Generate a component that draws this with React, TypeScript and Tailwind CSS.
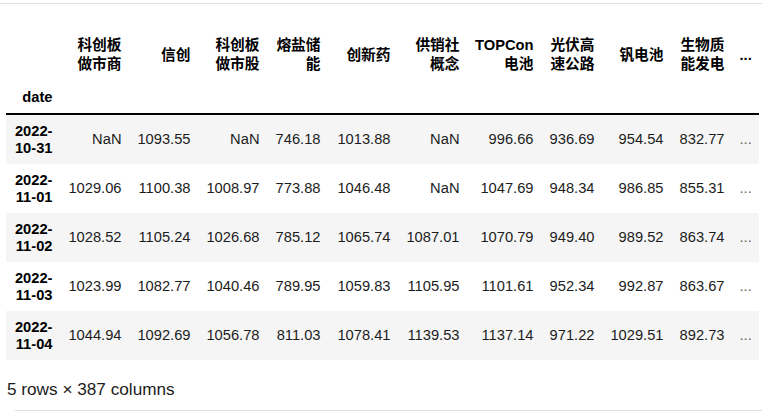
import React from 'react';

type Row = { date: [string, string]; values: string[] };

const columns: string[] = [
  '科创板做市商',
  '信创',
  '科创板做市股',
  '熔盐储能',
  '创新药',
  '供销社概念',
  'TOPCon电池',
  '光伏高速公路',
  '钒电池',
  '生物质能发电',
];

const rows: Row[] = [
  { date: ['2022-', '10-31'], values: ['NaN', '1093.55', 'NaN', '746.18', '1013.88', 'NaN', '996.66', '936.69', '954.54', '832.77'] },
  { date: ['2022-', '11-01'], values: ['1029.06', '1100.38', '1008.97', '773.88', '1046.48', 'NaN', '1047.69', '948.34', '986.85', '855.31'] },
  { date: ['2022-', '11-02'], values: ['1028.52', '1105.24', '1026.68', '785.12', '1065.74', '1087.01', '1070.79', '949.40', '989.52', '863.74'] },
  { date: ['2022-', '11-03'], values: ['1023.99', '1082.77', '1040.46', '789.95', '1059.83', '1105.95', '1101.61', '952.34', '992.87', '863.67'] },
  { date: ['2022-', '11-04'], values: ['1044.94', '1092.69', '1056.78', '811.03', '1078.41', '1139.53', '1137.14', '971.22', '1029.51', '892.73'] },
];

export default function App() {
  return (
    <div className="w-[762px] h-[412px] bg-white overflow-hidden font-['Liberation_Sans','Noto_Sans_CJK_SC',sans-serif] text-black">
      <div className="h-[3px]" />
      <div className="border-t border-[#dedede] pt-[24px] pl-[6px]">
        {/* dataframe */}
        <table className="table-fixed border-separate border-spacing-0 w-[753px] text-[14.7px]">
          <colgroup>
            <col className="w-[54px]" />
            <col className="w-[69px]" />
            <col className="w-[69px]" />
            <col className="w-[69px]" />
            <col className="w-[61px]" />
            <col className="w-[70px]" />
            <col className="w-[69px]" />
            <col className="w-[74px]" />
            <col className="w-[61px]" />
            <col className="w-[69px]" />
            <col className="w-[61px]" />
            <col className="w-[27px]" />
          </colgroup>
          <thead>
            <tr>
              <th className="px-[7.5px] py-[8px]" />
              {columns.map(c => (
                <th key={c} className="px-[7.5px] py-[8px] text-right align-middle font-bold leading-[19px]">
                  {c}
                </th>
              ))}
              <th className="px-[7.5px] py-[8px] text-right align-middle font-bold leading-[19px]">...</th>
            </tr>
            <tr>
              <th className="px-[7.5px] py-[7px] text-right font-bold leading-[17px] border-b-2 border-black">date</th>
              {columns.map(c => (
                <th key={c} className="border-b-2 border-black" />
              ))}
              <th className="border-b-2 border-black" />
            </tr>
          </thead>
          <tbody>
            {rows.map((r, i) => (
              <tr key={r.date[1]} className={i % 2 === 0 ? 'bg-[#f5f5f5]' : 'bg-white'}>
                <th className="px-[7.5px] py-[7.5px] text-right align-middle font-bold leading-[17px]">
                  {r.date[0]}
                  <br />
                  {r.date[1]}
                </th>
                {r.values.map((v, j) => (
                  <td key={j} className="px-[7.5px] py-[7.5px] text-right align-middle whitespace-nowrap leading-[17px] text-[#1c1c1c]">
                    {v}
                  </td>
                ))}
                <td className="px-[7.5px] py-[7.5px] text-right align-middle leading-[17px] text-[#666]">...</td>
              </tr>
            ))}
          </tbody>
        </table>
        <p className="mt-[19px] pl-px text-[17.2px] leading-[20px] text-[#1c1c1c]">5 rows × 387 columns</p>
      </div>
      <div className="mt-[11px] ml-[15px] border-t border-[#dedede]" />
    </div>
  );
}
